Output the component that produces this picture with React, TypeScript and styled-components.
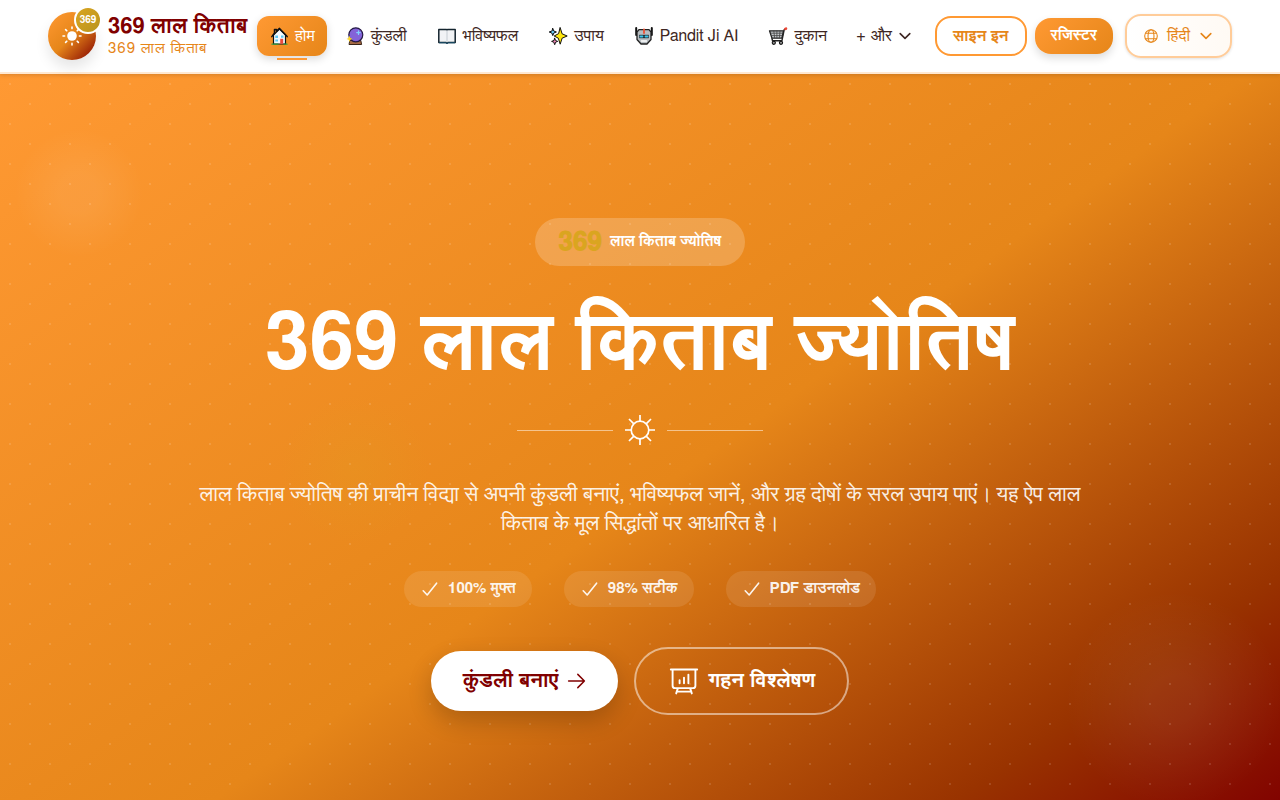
import React from "react";
import styled, { createGlobalStyle, css } from "styled-components";

const Global = createGlobalStyle`
  *, *::before, *::after { box-sizing: border-box; }
  body {
    margin: 0; background: #fff; color: #3e2723; line-height: 24px;
    font-family: FreeSans, "Liberation Sans", sans-serif;
  }
  button, a { font: inherit; color: inherit; text-decoration: none; cursor: pointer; }
  h1, p, ul { margin: 0; padding: 0; list-style: none; }
  svg { display: block; flex: none; }
`;

const saffron = "linear-gradient(135deg, #ff9933 0%, #e68619 100%)";

/* ---------- header ---------- */
const Header = styled.header`
  position: relative; z-index: 2;
  display: flex; align-items: center; gap: 8px;
  height: 74px; padding: 0 48px;
  background: #fff; border-bottom: 2px solid #ffe8d1;
  box-shadow: 0 1px 4px rgba(0, 0, 0, 0.15);
  white-space: nowrap;
`;
const Brand = styled.a`
  display: flex; align-items: center; gap: 12px;
`;
const Logo = styled.span`
  position: relative; display: grid; place-items: center;
  width: 48px; height: 48px; border-radius: 50%; color: #fff;
  background: linear-gradient(135deg, #ff9933 0%, #e68619 50%, #800000 100%);
  box-shadow: 0 8px 14px rgba(0, 0, 0, 0.1);
`;
const LogoBadge = styled.span`
  position: absolute; top: -6px; right: -6px;
  width: 28px; height: 28px; border: 2px solid #fff; border-radius: 50%;
  background: linear-gradient(135deg, #daa520, #b8941f);
  font-size: 10px; font-weight: 700; line-height: 24px; text-align: center;
`;
const BrandText = styled.span`
  display: flex; flex-direction: column; min-width: 141px;
`;
const BrandName = styled.span`
  font-size: 22px; font-weight: 700; line-height: 26px; color: #800000;
`;
const BrandSub = styled.span`
  font-size: 15px; line-height: 20px; color: #e68619; letter-spacing: 1px;
`;
const Nav = styled.nav`
  display: flex; align-items: center; gap: 6px;
`;
const navItem = css`
  position: relative; display: flex; align-items: center; gap: 6px;
  height: 40px; padding: 0 12px; border-radius: 12px;
  font-size: 16px;
`;
const NavLink = styled.a<{ $active?: boolean }>`
  ${navItem}
  ${p => p.$active && css`
    color: #fff; background: ${saffron}; box-shadow: 0 3px 8px rgba(0, 0, 0, 0.15);
    &::after {
      content: ""; position: absolute; left: 20px; right: 20px; bottom: -4px;
      height: 2px; background: #ff9933;
    }
  `}
`;
const MoreButton = styled.button`
  ${navItem}
  gap: 5px; padding: 0 11px; border: 0; background: none;
`;
const Actions = styled.div`
  display: flex; align-items: center; gap: 8px; margin-left: auto;
`;
const SignIn = styled.a`
  display: flex; align-items: center; height: 40px; padding: 0 16px;
  border: 2px solid #ff9933; border-radius: 16px;
  font-size: 16px; font-weight: 600; color: #e68619;
`;
const Register = styled.a`
  display: flex; align-items: center; height: 36px; padding: 0 16px;
  border-radius: 16px; background: ${saffron}; color: #fff;
  font-size: 15px; font-weight: 700; box-shadow: 0 4px 8px rgba(0, 0, 0, 0.14);
`;
const Language = styled.button`
  display: flex; align-items: center; gap: 8px; height: 44px; padding: 0 16px; margin-left: 4px;
  border: 2px solid #ffcc99; border-radius: 16px; color: #e68619;
  background: linear-gradient(90deg, #ffffff, #fffaf4);
  box-shadow: 0 1px 3px rgba(0, 0, 0, 0.12);
  font-size: 16px;
`;

/* ---------- hero ---------- */
const Hero = styled.main`
  position: relative; overflow: hidden;
  display: flex; flex-direction: column; align-items: center;
  min-height: calc(100vh - 74px); padding: 144px 32px 84px;
  color: #fff; text-align: center;
  background:
    radial-gradient(circle at 25% 25%, rgba(255, 255, 255, 0.12) 1px, transparent 1px) 0 0 / 40px 40px,
    radial-gradient(circle at 75% 75%, rgba(255, 255, 255, 0.12) 1px, transparent 1px) 0 0 / 40px 40px,
    linear-gradient(145deg, #ff9933 0%, #e68619 54%, #993300 86%, #800000 101%);
`;
const Glow = styled.span<{ $kind: "left" | "right" | "gold" }>`
  position: absolute; border-radius: 50%; pointer-events: none;
  ${p => p.$kind === "left" && css`
    top: 54px; left: 14px; width: 130px; height: 130px;
    background: radial-gradient(circle, rgba(255, 255, 255, 0.07) 20%, transparent 70%);
  `}
  ${p => p.$kind === "right" && css`
    right: -4px; bottom: -10px; width: 220px; height: 220px;
    background: radial-gradient(circle, rgba(255, 255, 255, 0.06) 15%, transparent 70%);
  `}
  ${p => p.$kind === "gold" && css`
    left: 280px; bottom: 256px; width: 150px; height: 150px;
    background: radial-gradient(circle, rgba(218, 165, 32, 0.18), transparent 70%);
  `}
`;
const Tag = styled.p`
  position: relative; display: flex; align-items: center; gap: 8px;
  height: 48px; padding: 0 24px; margin-bottom: 28px; border-radius: 24px;
  background: rgba(255, 255, 255, 0.2); font-size: 15px; font-weight: 600;
`;
const TagNumber = styled.strong`
  font-size: 26px; line-height: 32px; color: #daa520;
`;
const Title = styled.h1`
  position: relative; font-size: 80px; font-weight: 700; line-height: 100px; margin-bottom: 20px;
`;
const Divider = styled.div`
  position: relative; display: flex; align-items: center; gap: 11px; margin-bottom: 34px;
`;
const Rule = styled.span`
  width: 96px; height: 1px; background: rgba(255, 255, 255, 0.5);
`;
const Lead = styled.p`
  position: relative; max-width: 896px; margin-bottom: 33px;
  font-size: 21px; line-height: 29px; color: rgba(255, 255, 255, 0.9);
`;
const Chips = styled.ul`
  position: relative; display: flex; flex-wrap: wrap; justify-content: center; gap: 32px; margin-bottom: 40px;
`;
const Chip = styled.li`
  display: flex; align-items: center; gap: 8px; height: 36px; padding: 0 16px;
  border-radius: 18px; background: rgba(255, 255, 255, 0.1);
  font-size: 15px; font-weight: 600; color: rgba(255, 255, 255, 0.92);
`;
const Buttons = styled.div`
  position: relative; display: flex; flex-wrap: wrap; justify-content: center; align-items: center; gap: 16px;
`;
const Primary = styled.a`
  display: flex; align-items: center; gap: 8px; height: 60px; padding: 0 32px;
  border-radius: 30px; background: #fff; color: #800000;
  font-size: 21px; font-weight: 700; box-shadow: 0 10px 24px rgba(0, 0, 0, 0.2);
`;
const Secondary = styled.a`
  display: flex; align-items: center; gap: 8px; height: 68px; padding: 0 32px;
  border: 2px solid rgba(255, 255, 255, 0.5); border-radius: 34px;
  font-size: 21px; font-weight: 700;
`;

/* ---------- drawings ---------- */
const SunSolid = () => (
  <svg width="20" height="20" viewBox="0 0 20 20" fill="currentColor" stroke="currentColor" strokeLinecap="round">
    <circle cx="10" cy="10" r="4.8" stroke="none" />
    <path d="M10 1v1.6M10 17.4V19M1 10h1.6M17.4 10H19M3.6 3.6l1.2 1.2M15.2 15.2l1.2 1.2M3.6 16.4l1.2-1.2M15.2 4.8l1.2-1.2" strokeWidth="1.6" />
  </svg>
);
const SunOutline = () => (
  <svg width="32" height="32" viewBox="0 0 32 32" fill="none" stroke="currentColor" strokeWidth="1.7">
    <circle cx="16" cy="16" r="8.8" />
    <path d="M16 1v6M16 25v6M1 16h6M25 16h6M5 5l4.6 4.6M22.4 22.4L27 27M5 27l4.6-4.6M22.4 9.6L27 5" />
  </svg>
);
const Chevron = () => (
  <svg width="16" height="16" viewBox="0 0 16 16" fill="none" stroke="currentColor" strokeWidth="1.6" strokeLinecap="round" strokeLinejoin="round">
    <path d="M3.2 5.6l4.8 4.8 4.8-4.8" />
  </svg>
);
const Globe = () => (
  <svg width="16" height="16" viewBox="0 0 16 16" fill="none" stroke="currentColor" strokeWidth="1.1">
    <circle cx="8" cy="8" r="6.3" />
    <ellipse cx="8" cy="8" rx="3" ry="6.3" />
    <path d="M2.4 5.3h11.2M2.4 10.7h11.2" />
  </svg>
);
const Check = () => (
  <svg width="20" height="20" viewBox="0 0 20 20" fill="none" stroke="currentColor" strokeWidth="1.6" strokeLinecap="round" strokeLinejoin="round">
    <path d="M3.2 11.8l4 4.2L16.6 4.2" />
  </svg>
);
const Arrow = () => (
  <svg width="20" height="20" viewBox="0 0 20 20" fill="none" stroke="currentColor" strokeWidth="1.5" strokeLinecap="round" strokeLinejoin="round">
    <path d="M2.6 10h15.8M11.8 3.4l6.6 6.6-6.6 6.6" />
  </svg>
);
const Board = () => (
  <svg width="32" height="32" viewBox="0 0 32 32" fill="none" stroke="currentColor" strokeWidth="1.9" strokeLinecap="round">
    <path d="M2.8 4.5h26.4M4.6 4.5v16.2a2.4 2.4 0 002.4 2.4h18a2.4 2.4 0 002.4-2.4V4.5M9.8 23.4L8.2 28.4M22.2 23.4l1.6 5M9.2 26.6h13.6M11.6 15.2v3M16 12.6v5.6M20.4 9.6v8.6" />
  </svg>
);

const EmojiSvg = ({ children }: { children: React.ReactNode }) => (
  <svg width="20" height="20" viewBox="0 0 20 20" strokeLinejoin="round" strokeLinecap="round" aria-hidden="true">{children}</svg>
);
const House = () => (
  <EmojiSvg>
    <path d="M4.5 9v9h12V9l-6-6z" fill="#f5fbff" stroke="#111" strokeWidth="1.2" />
    <path d="M2.8 10.6L5.5 7V3.6h2v1.6l3-2.8 7.7 8.2" fill="none" stroke="#111" strokeWidth="1.5" />
    <path d="M6.3 9.5H9v2.6H6.3zM12 9.5h2.5v2.3H12zM6.3 13.5H9v2H6.3z" fill="#61c9f2" />
    <path d="M11.2 12.8h3v5h-3z" fill="#ea4a3c" />
    <path d="M3 18.2h6M15 18.2h3" stroke="#2f9e44" strokeWidth="1.3" />
  </EmojiSvg>
);
const Crystal = () => (
  <EmojiSvg>
    <path d="M5.2 14.5h10.6l.8 4H4.4z" fill="#a56a43" stroke="#3a2418" strokeWidth="1" />
    <circle cx="10.8" cy="8.8" r="7" fill="#8463d8" stroke="#241a45" strokeWidth="1.2" />
    <path d="M13.5 4.8v3.6M11.7 6.6h3.6" stroke="#7fd0ff" strokeWidth="1.2" />
    <path d="M4.5 9.8l.9 2.2 2.1.9-2.1.9-.9 2.2-.9-2.2-2.1-.9 2.1-.9z" fill="#ffd629" />
  </EmojiSvg>
);
const Book = () => (
  <EmojiSvg>
    <path d="M1.8 3.5h7.7l.5.5.5-.5h7.7v13H11l-1 .8-1-.8H1.8z" fill="#f1f3f5" stroke="#14242e" strokeWidth="1.5" />
    <path d="M10 4.8v11" stroke="#c5ccd2" strokeWidth="1" />
    <path d="M2.5 16.8H9l1 .8 1-.8h6.6" fill="none" stroke="#1c5875" strokeWidth="1" />
  </EmojiSvg>
);
const Sparkles = () => (
  <EmojiSvg>
    <g stroke="#111" strokeWidth="1">
      <path d="M12.2 1.8l1.9 6 5.1 2.2-5.1 2.2-1.9 6-1.900-6L6.200 10l4.100-2.200z" fill="#ffe70f" />
      <path d="M4.8 2.500l1 2.500 2.600 1-2.600 1-1 2.600L3.800 7 1.200 6l2.600-1z" fill="#63c8f5" />
      <path d="M6.700 12.300l.9 2.200 2.100.9-2.100.8-.9 2.500-.9-2.500-2.200-.8 2.200-.9z" fill="#ef86b6" />
    </g>
  </EmojiSvg>
);
const Robot = () => (
  <EmojiSvg>
    <path d="M2.200 2v7M17.800 2v7" stroke="#111" strokeWidth="2" />
    <path d="M3 6l2-2.400h10L17 6v7.500L13 18H7l-4-4.500z" fill="#b7bdc1" stroke="#222" strokeWidth="1.3" />
    <path d="M5.200 8.800h9.600v3.400H5.200z" fill="#20272c" />
    <path d="M6.500 10.500h2M11.500 10.500h2" stroke="#35c5ee" strokeWidth="1.8" />
    <path d="M10 3.500v3.500" stroke="#ee4f32" strokeWidth="1.8" />
    <path d="M7.500 15h5" stroke="#fff" strokeWidth="1.3" />
  </EmojiSvg>
);
const Cart = () => (
  <EmojiSvg>
    <path d="M1.500 4.800h14l-1.600 7.400H4z" fill="#c3c7ca" stroke="#222" strokeWidth="1.3" />
    <path d="M2.800 7.200h12M3.300 9.600h11.200M5.800 4.800l.8 7.200M8.900 4.800V12M12 4.800l-.6 7.200" stroke="#444" strokeWidth=".8" />
    <path d="M14 14.800H4.500l-.5-2.200M14 14.400l2.200-10.800 2-1" fill="none" stroke="#222" strokeWidth="1.4" />
    <path d="M17.400 2.900l.6-.3" stroke="#ee4433" strokeWidth="2.6" />
    <circle cx="5.8" cy="16.8" r="1.6" fill="#999" stroke="#111" strokeWidth="1.1" />
    <circle cx="13" cy="16.8" r="1.6" fill="#999" stroke="#111" strokeWidth="1.1" />
  </EmojiSvg>
);

const links = [
  { label: "होम", Icon: House, active: true },
  { label: "कुंडली", Icon: Crystal },
  { label: "भविष्यफल", Icon: Book },
  { label: "उपाय", Icon: Sparkles },
  { label: "Pandit Ji AI", Icon: Robot },
  { label: "दुकान", Icon: Cart },
];

export default function App() {
  return (
    <>
      <Global />
      <Header>
        <Brand href="#">
          <Logo><SunSolid /><LogoBadge>369</LogoBadge></Logo>
          <BrandText>
            <BrandName>369 लाल किताब</BrandName>
            <BrandSub>369 लाल किताब</BrandSub>
          </BrandText>
        </Brand>
        <Nav>
          {links.map(({ label, Icon, active }) => (
            <NavLink key={label} href="#" $active={active}><Icon />{label}</NavLink>
          ))}
          <MoreButton type="button"><span>+</span><span>और</span><Chevron /></MoreButton>
        </Nav>
        <Actions>
          <SignIn href="#">साइन इन</SignIn>
          <Register href="#">रजिस्टर</Register>
          <Language type="button"><Globe />हिंदी<Chevron /></Language>
        </Actions>
      </Header>
      <Hero>
        <Glow $kind="left" />
        <Glow $kind="right" />
        <Glow $kind="gold" />
        <Tag><TagNumber>369</TagNumber>लाल किताब ज्योतिष</Tag>
        <Title>369 लाल किताब ज्योतिष</Title>
        <Divider><Rule /><SunOutline /><Rule /></Divider>
        <Lead>
          लाल किताब ज्योतिष की प्राचीन विद्या से अपनी कुंडली बनाएं, भविष्यफल जानें, और ग्रह दोषों के सरल उपाय पाएं। यह ऐप लाल किताब के मूल सिद्धांतों पर आधारित है।
        </Lead>
        <Chips>
          <Chip><Check />100% मुफ्त</Chip>
          <Chip><Check />98% सटीक</Chip>
          <Chip><Check />PDF डाउनलोड</Chip>
        </Chips>
        <Buttons>
          <Primary href="#">कुंडली बनाएं<Arrow /></Primary>
          <Secondary href="#"><Board />गहन विश्लेषण</Secondary>
        </Buttons>
      </Hero>
    </>
  );
}
